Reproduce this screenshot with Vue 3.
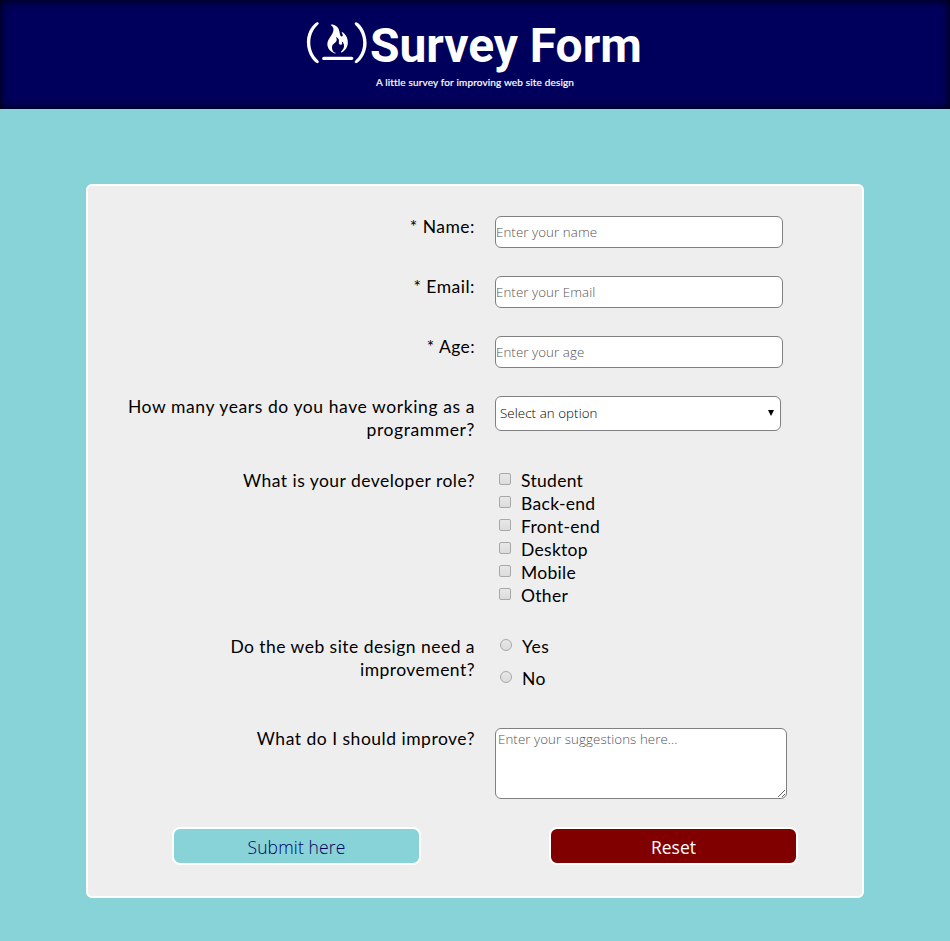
<script setup>
const fields = [
  { id: 'name', label: '* Name:', hint: 'Enter your name', type: 'text' },
  { id: 'email', label: '* Email:', hint: 'Enter your Email', type: 'email' },
  { id: 'age', label: '* Age:', hint: 'Enter your age', type: 'text' },
]
const roles = ['Student', 'Back-end', 'Front-end', 'Desktop', 'Mobile', 'Other']
const answers = ['Yes', 'No']
</script>

<template>
  <div class="page">
    <header class="header">
      <h1 class="title">
        <svg class="logo" viewBox="0 0 576 512" fill="#fff" aria-hidden="true">
          <path d="M69.3 144.5c-41 68.5-36.4 163 1 227C92.5 409.7 120 423.9 120 438c0 6.8-6 13-12.8 13C87.7 451 8 375.5 8 253.2c0-111.5 78-186 97.1-186 6 0 14.9 4.8 14.9 11.1 0 12.7-28.3 28.6-50.7 66.2zm195.8 213.8c4.5 1.8 12.3 5.2 12.3-1.2 0-2.7-2.2-2.9-4.3-3.6-8.5-3.4-14-7.7-19.1-15.2-8.2-12.1-10.1-24.2-10.1-38.6 0-32.1 44.2-37.9 44.2-70 0-12.3-7.7-15.9-7.7-19.3 0-2.2.7-2.2 2.9-2.2 8 0 19.1 13.3 22.5 19.8 2.2 4.6 2.4 6 2.4 11.1 0 7-.7 14.2-.7 21.3 0 27 31.9 19.8 31.9 6.8 0-6-3.6-11.6-3.6-17.4 0-.7 0-1.2.7-1.2 3.4 0 9.4 7.7 11.1 10.1 5.8 8.9 8.5 20.8 8.5 31.4 0 32.4-29.5 49-29.5 56 0 1 2.9 7.7 12.1 1.9 29.7-15.1 53.1-47.6 53.1-89.8 0-33.6-8.7-57.7-32.1-82.6-3.9-4.1-16.4-16.9-22.5-16.9-8.2 0 7.2 18.6 7.2 31.2 0 7.2-4.8 12.3-12.3 12.3-11.6 0-14.5-25.4-15.9-33.3-5.8-33.8-12.8-58.2-46.4-74.1-10.4-5-36.5-11.8-36.5-2.2 0 2.4 2.7 4.1 4.6 5.1 9.2 5.6 19.6 21.4 19.6 38.2 0 46.1-57.7 88.2-57.7 136.2-.2 40.3 28.1 72.6 65.3 86.2zM470.4 67c-6 0-14.4 6.5-14.4 12.6 0 8.7 12.1 19.6 17.6 25.4 81.6 85.1 78.6 214.3 17.6 291-7 8.9-35.3 35.3-35.3 43.5 0 5.1 8.2 11.4 13.2 11.4 25.4 0 98.8-80.8 98.8-185.7C568 145.9 491.8 67 470.4 67zm-42.3 323.1H167c-9.4 0-15.5 7.5-15.5 16.4 0 8.5 7 15.5 15.5 15.5h261.1c9.4 0 15.5-7.5 15.5-16.4 0-8.5-7-15.5-15.5-15.5z" />
        </svg>
        <span class="title-text">Survey Form</span>
      </h1>
      <p class="subtitle">A little survey for improving web site design</p>
    </header>

    <form class="card" @submit.prevent>
      <div v-for="f in fields" :key="f.id" class="row">
        <label class="label" :class="'label-' + f.id" :for="f.id">{{ f.label }}</label>
        <input :id="f.id" class="field" :type="f.type" :placeholder="f.hint" />
      </div>

      <div class="row row-select">
        <label class="label label-years" for="years">How many years do you have working as a programmer?</label>
        <div class="select-wrap">
          <select id="years" class="select">
            <option>Select an option</option>
          </select>
          <svg class="arrow" viewBox="0 0 6 6" aria-hidden="true"><path d="M0 0h6L3 6z" /></svg>
        </div>
      </div>

      <div class="row row-roles">
        <span class="label label-role">What is your developer role?</span>
        <div class="options">
          <label v-for="r in roles" :key="r" class="option">
            <input class="check" type="checkbox" /><span class="option-text">{{ r }}</span>
          </label>
        </div>
      </div>

      <div class="row row-radio">
        <span class="label label-need">Do the web site design need a improvement?</span>
        <div class="options radios">
          <label v-for="a in answers" :key="a" class="option">
            <input class="check radio" type="radio" name="improve" /><span class="option-text">{{ a }}</span>
          </label>
        </div>
      </div>

      <div class="row row-area">
        <label class="label" for="ideas">What do I should improve?</label>
        <textarea id="ideas" class="area" placeholder="Enter your suggestions here..."></textarea>
      </div>

      <div class="buttons">
        <button class="btn submit" type="submit">Submit here</button>
        <button class="btn reset" type="reset">Reset</button>
      </div>
    </form>
  </div>
</template>

<style>
body {
  margin: 0;
  background: #88d3d8;
}
</style>

<style scoped>
.page {
  box-sizing: border-box;
  height: 941px;
  background: #88d3d8;
  font-family: Lato, 'Liberation Sans', sans-serif;
  color: #000;
  overflow: hidden;
}
.header {
  box-sizing: border-box;
  height: 109px;
  padding-top: 15px;
  background: #00005c;
  box-shadow: inset 0 0 10px #000;
  color: #fff;
}
.title {
  display: flex;
  width: 338px;
  height: 55px;
  margin: 0 auto;
  font: 700 48px/61px Roboto, sans-serif;
  white-space: nowrap;
}
.logo {
  flex: none;
  width: 61.5px;
  height: 54.7px;
  margin-right: 2.5px;
}
.title-text {
  letter-spacing: -0.05px;
}
.subtitle {
  margin: 5px 0 0;
  font-size: 10px;
  line-height: 15px;
  letter-spacing: 0.16px;
  text-align: center;
  -webkit-text-stroke: 0.2px #fff;
}
.card {
  box-sizing: border-box;
  width: 778px;
  height: 714px;
  margin: 75px auto 0;
  padding-top: 30px;
  border: 2px solid #fff;
  border-radius: 6px;
  background: #eee;
}
.row {
  display: grid;
  grid-template-columns: 387px 1fr;
  column-gap: 20px;
  align-items: start;
  height: 60px;
}
.row-select { height: 74px; }
.row-roles { height: 166px; }
.row-radio { height: 92px; }
.row-area { height: 99px; }
.label {
  justify-self: end;
  width: 360px;
  margin-top: -1px;
  font-size: 17.5px;
  line-height: 23px;
  text-align: right;
  letter-spacing: 0.5px;
}
.label-age { letter-spacing: 0.4px; }
.label-years { letter-spacing: 0.59px; }
.label-role { letter-spacing: 0.46px; }
.label-need { letter-spacing: 0.46px; }
.field,
.select,
.area {
  box-sizing: border-box;
  margin: 0;
  border: 1px solid #808080;
  border-radius: 6px;
  background: #fff;
  font: 300 13.3px 'Open Sans', sans-serif;
  letter-spacing: 0.08px;
  color: #000;
  outline: none;
}
.field {
  width: 288px;
  height: 32px;
  padding: 0;
}
.field::placeholder,
.area::placeholder {
  color: #555;
}
.select-wrap {
  position: relative;
  width: 286px;
  height: 35px;
}
.select {
  appearance: none;
  width: 286px;
  height: 35px;
  padding: 0 4px 2px;
}
.arrow {
  position: absolute;
  top: 14px;
  right: 7px;
  width: 6px;
  height: 6px;
}
.area {
  width: 292px;
  height: 71px;
  padding: 1px 2px;
}
.options {
  display: flex;
  flex-direction: column;
  padding-left: 4px;
}
.option {
  display: flex;
  gap: 10px;
  height: 23px;
  font-size: 17.5px;
  line-height: 23px;
  letter-spacing: 0.3px;
}
.option-text {
  margin-top: -1px;
}
.check {
  appearance: none;
  box-sizing: border-box;
  flex: none;
  width: 12px;
  height: 12px;
  margin: 3px 0 0;
  border: 1px solid #a8a8a8;
  border-radius: 2px;
  background: linear-gradient(#e8e8e8, #dcdcdc);
}
.radio {
  border-radius: 50%;
}
.radios {
  gap: 9px;
  padding-left: 5px;
}
.radios .option {
  letter-spacing: 0.5px;
}
.buttons {
  display: flex;
  gap: 128px;
  padding-left: 84px;
}
.btn {
  box-sizing: border-box;
  width: 249px;
  height: 38px;
  padding: 1px 0 0;
  border: 2px solid #fff;
  border-radius: 8px;
  font: 400 17.5px 'Open Sans', sans-serif;
}
.submit {
  background: #88d3d8;
  color: #00005c;
  font-weight: 300;
  letter-spacing: 0.15px;
}
.reset {
  background: #800000;
  color: #fff;
}
</style>
